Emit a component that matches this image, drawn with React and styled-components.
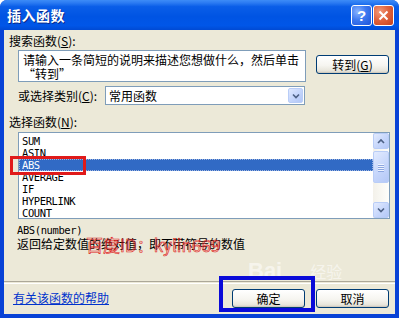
import React from "react";
import styled, { createGlobalStyle } from "styled-components";

const GlobalStyle = createGlobalStyle`
  html, body {
    margin: 0;
    padding: 0;
    overflow: hidden;
    background: #ffffff;
  }
`;

const cjk = `"Noto Sans CJK SC", "Noto Sans", sans-serif`;
const mono = `"DejaVu Sans Mono", "Liberation Mono", monospace`;

const Window = styled.div`
  position: relative;
  width: 399px;
  height: 318px;
  display: flex;
  flex-direction: column;
  background: #0842d6;
  border-radius: 7px 7px 0 0;
  overflow: hidden;
  font-family: ${cjk};
  font-size: 12px;
  color: #000;
`;

const TitleBar = styled.div`
  height: 30px;
  flex: none;
  display: flex;
  align-items: center;
  justify-content: space-between;
  padding: 0 5px 0 7px;
  box-sizing: border-box;
  background: linear-gradient(
    to bottom,
    #3d8cf7 0%,
    #2a7af2 10%,
    #0a5ee8 22%,
    #0054e3 55%,
    #0056e8 85%,
    #004ad4 100%
  );
`;

const Title = styled.div`
  color: #fff;
  font-weight: bold;
  font-size: 14px;
  letter-spacing: 0.5px;
  text-shadow: 1px 1px 0 #0a2a8a;
`;

const Caption = styled.div`
  display: flex;
  gap: 1px;
`;

const CaptionButton = styled.div`
  width: 21px;
  height: 21px;
  box-sizing: border-box;
  border: 1px solid #fff;
  border-radius: 3px;
  display: flex;
  align-items: center;
  justify-content: center;
  color: #fff;
  font-family: "Liberation Sans", sans-serif;
  font-weight: bold;
  font-size: 15px;
  background: ${(p) =>
    p.$danger
      ? "radial-gradient(circle at 30% 30%, #f29a7a 0%, #e0643e 45%, #c4401b 100%)"
      : "radial-gradient(circle at 30% 30%, #8ab4ff 0%, #3d79f0 45%, #1d52d8 100%)"};
`;

const Body = styled.div`
  flex: 1;
  margin: 0 4px 4px 4px;
  padding: 4px 0 0 5px;
  display: flex;
  flex-direction: column;
  background: #ece9d8;
`;

const Label = styled.div`
  line-height: 14px;
  height: 14px;
  margin-top: ${(p) => p.$top || 0}px;
  white-space: nowrap;
`;

const SearchRow = styled.div`
  display: flex;
  align-items: flex-start;
  gap: 10px;
  margin-top: 2px;
  padding-left: 9px;
`;

const TextBox = styled.div`
  width: 288px;
  height: 32px;
  box-sizing: border-box;
  border: 1px solid #7f9db9;
  background: #fff;
  padding: 2px 4px 0 4px;
  line-height: 14px;
  white-space: nowrap;
  overflow: hidden;
`;

const Button = styled.div`
  width: 73px;
  height: 19px;
  box-sizing: border-box;
  border: 1px solid #003c74;
  border-radius: 3px;
  display: flex;
  align-items: center;
  justify-content: center;
  margin-top: ${(p) => p.$top || 0}px;
  background: linear-gradient(to bottom, #ffffff 0%, #f6f5f0 55%, #e8e6dc 85%, #d6d0c5 100%);
  box-shadow: inset 0 -1px 0 #d0cbbf;
`;

const CategoryRow = styled.div`
  display: flex;
  align-items: center;
  margin-top: 4px;
  padding-left: 9px;
`;

const CategoryLabel = styled.div`
  width: 87px;
  white-space: nowrap;
`;

const Select = styled.div`
  width: 200px;
  height: 19px;
  box-sizing: border-box;
  border: 1px solid #7f9db9;
  background: #fff;
  display: flex;
  align-items: center;
  justify-content: space-between;
  padding: 0 0 0 3px;
`;

const ArrowButton = styled.div`
  width: 15px;
  height: 15px;
  margin-right: 1px;
  box-sizing: border-box;
  border: 1px solid #b9cdf7;
  border-radius: 2px;
  display: flex;
  align-items: center;
  justify-content: center;
  background: linear-gradient(135deg, #dfe8fe 0%, #c3d4fb 55%, #b1c6f7 100%);
`;

const ListBox = styled.div`
  margin-top: 3px;
  margin-left: 9px;
  width: 372px;
  height: 87px;
  box-sizing: border-box;
  border: 1px solid #7f9db9;
  background: #fff;
  display: flex;
  overflow: hidden;
`;

const Items = styled.div`
  flex: 1;
  padding-top: 2px;
`;

const Item = styled.div`
  height: 12px;
  line-height: 12px;
  padding-left: 3px;
  font-family: ${mono};
  font-size: 10.5px;
  letter-spacing: -0.4px;
  color: ${(p) => (p.$selected ? "#fff" : "#000")};
  background: ${(p) => (p.$selected ? "#316ac5" : "transparent")};
  outline: ${(p) => (p.$selected ? "1px dotted #9db4e0" : "none")};
  outline-offset: -1px;
`;

const ScrollBar = styled.div`
  width: 16px;
  display: flex;
  flex-direction: column;
  background: linear-gradient(to right, #f3f1ea, #fefefb);
`;

const ScrollButton = styled.div`
  height: 16px;
  box-sizing: border-box;
  border: 1px solid #b9cdf7;
  border-radius: 2px;
  display: flex;
  align-items: center;
  justify-content: center;
  background: linear-gradient(135deg, #e3ebfe 0%, #c6d6fb 55%, #b4c8f7 100%);
  margin-top: ${(p) => p.$top || 0}px;
`;

const Thumb = styled(ScrollButton)`
  height: 32px;
  flex-direction: column;
  gap: 1px;
`;

const Grip = styled.div`
  width: 6px;
  height: 1px;
  background: #eef3fe;
  box-shadow: 0 1px 0 #8ca6e0;
`;

const Spacer = styled.div`
  flex: 1;
`;

const Signature = styled.div`
  margin: 5px 0 0 8px;
  height: 13px;
  line-height: 13px;
  font-family: ${mono};
  font-size: 10.5px;
  letter-spacing: -0.4px;
`;

const Description = styled.div`
  margin-left: 8px;
  height: 14px;
  line-height: 14px;
  white-space: nowrap;
`;

const Separator = styled.div`
  margin: 30px 0 0 -5px;
  height: 1px;
  border-top: 1px solid #aca899;
  border-bottom: 1px solid #fff;
`;

const BottomRow = styled.div`
  height: 28px;
  display: flex;
  align-items: center;
  padding-right: 6px;
`;

const HelpLink = styled.a`
  margin-left: 4px;
  color: #0033cc;
  text-decoration: underline;
  margin-top: -2px;
`;

const Actions = styled.div`
  margin-left: auto;
  display: flex;
  gap: 11px;
`;

const Marker = styled.div`
  position: absolute;
  box-sizing: border-box;
  border: ${(p) => p.$w}px solid ${(p) => p.$color};
  left: ${(p) => p.$x}px;
  top: ${(p) => p.$y}px;
  width: ${(p) => p.$width}px;
  height: ${(p) => p.$height}px;
  pointer-events: none;
`;

const Stamp = styled.div`
  position: absolute;
  left: 86px;
  top: 236px;
  font-family: ${cjk};
  font-size: 17px;
  line-height: 18px;
  color: rgba(230, 30, 30, 0.12);
  -webkit-text-stroke: 0.6px #e02424;
  white-space: nowrap;
  pointer-events: none;
`;

const Watermark = styled.div`
  position: absolute;
  left: 248px;
  top: 258px;
  display: flex;
  align-items: baseline;
  gap: 4px;
  color: rgba(255, 255, 255, 0.55);
  font-family: "Liberation Sans", sans-serif;
  font-weight: bold;
  font-size: 22px;
  pointer-events: none;
`;

const WatermarkCjk = styled.span`
  font-family: ${cjk};
  font-weight: normal;
  font-size: 16px;
  margin-left: 24px;
`;

const Chevron = ({ up }) => (
  <svg width="8" height="6" viewBox="0 0 8 6">
    <polyline
      points={up ? "1,5 4,2 7,5" : "1,1.5 4,4.5 7,1.5"}
      fill="none"
      stroke="#4d6185"
      strokeWidth="1.6"
    />
  </svg>
);

const functions = ["SUM", "ASIN", "ABS", "AVERAGE", "IF", "HYPERLINK", "COUNT"];

export default function App() {
  return (
    <>
      <GlobalStyle />
      <Window>
        <TitleBar>
          <Title>插入函数</Title>
          <Caption>
            <CaptionButton>?</CaptionButton>
            <CaptionButton $danger>
              <svg width="11" height="11" viewBox="0 0 11 11">
                <path d="M1.5 1.5 L9.5 9.5 M9.5 1.5 L1.5 9.5" stroke="#fff" strokeWidth="2" />
              </svg>
            </CaptionButton>
          </Caption>
        </TitleBar>
        <Body>
          <Label>
            搜索函数(<u>S</u>):
          </Label>
          <SearchRow>
            <TextBox>
              请输入一条简短的说明来描述您想做什么，然后单击
              <br />
              “转到”
            </TextBox>
            <Button $top={5}>
              转到(<u>G</u>)
            </Button>
          </SearchRow>
          <CategoryRow>
            <CategoryLabel>
              或选择类别(<u>C</u>):
            </CategoryLabel>
            <Select>
              常用函数
              <ArrowButton>
                <Chevron />
              </ArrowButton>
            </Select>
          </CategoryRow>
          <Label $top={10}>
            选择函数(<u>N</u>):
          </Label>
          <ListBox>
            <Items>
              {functions.map((f) => (
                <Item key={f} $selected={f === "ABS"}>
                  {f}
                </Item>
              ))}
            </Items>
            <ScrollBar>
              <ScrollButton>
                <Chevron up />
              </ScrollButton>
              <Thumb $top={2}>
                <Grip />
                <Grip />
                <Grip />
                <Grip />
              </Thumb>
              <Spacer />
              <ScrollButton>
                <Chevron />
              </ScrollButton>
            </ScrollBar>
          </ListBox>
          <Signature>ABS(number)</Signature>
          <Description>返回给定数值的绝对值，即不带符号的数值</Description>
          <Separator />
          <BottomRow>
            <HelpLink>有关该函数的帮助</HelpLink>
            <Actions>
              <Button>确定</Button>
              <Button>取消</Button>
            </Actions>
          </BottomRow>
        </Body>
        <Watermark>
          Bai
          <WatermarkCjk>经验</WatermarkCjk>
        </Watermark>
        <Stamp>百度ID：kylin669</Stamp>
        <Marker $x={10} $y={156} $width={76} $height={19} $w={3} $color="#e01a1a" />
        <Marker $x={219} $y={276} $width={96} $height={36} $w={4} $color="#0a0ad8" />
      </Window>
    </>
  );
}
